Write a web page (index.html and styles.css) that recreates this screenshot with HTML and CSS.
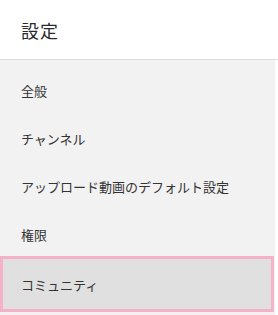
FILE: index.html
```html
<!DOCTYPE html>
<html lang="ja">
<head>
    <meta charset="UTF-8">
    <meta name="viewport" content="width=device-width, initial-scale=1.0">
    <title>設定</title>
    <link rel="stylesheet" href="styles.css">
</head>
<body>
    <div class="settings">
        <header class="settings-header">
            <h1 class="title">設定</h1>
        </header>
        <nav class="menu">
            <a class="menu-item" href="#">全般</a>
            <a class="menu-item" href="#">チャンネル</a>
            <a class="menu-item" href="#">アップロード動画のデフォルト設定</a>
            <a class="menu-item" href="#">権限</a>
            <a class="menu-item active" href="#">コミュニティ</a>
        </nav>
    </div>
</body>
</html>
```

FILE: styles.css
```css
:root {
    --panel-bg: #f2f2f2;
    --active-bg: #e0e0e0;
    --focus-pink: #f5b1c8;
    --text: #333333;
}

body {
    margin: 0;
    padding: 0;
    background: #ffffff;
    font-family: "Noto Sans CJK JP", "Noto Sans", sans-serif;
    color: var(--text);
}

.settings {
    width: 278px;
    height: 315px;
    display: flex;
    flex-direction: column;
}

.settings-header {
    height: 60px;
    border-bottom: 1px solid #dcdcdc;
    display: flex;
    align-items: center;
    padding-left: 21px;
    box-sizing: border-box;
}

.title {
    margin: 0;
    font-size: 18px;
    font-weight: 400;
    letter-spacing: 1px;
    color: #2b2b2b;
}

.menu {
    flex: 1;
    width: 275px;
    background: var(--panel-bg);
    padding-top: 6px;
    display: flex;
    flex-direction: column;
}

.menu-item {
    height: 48px;
    flex-shrink: 0;
    display: flex;
    align-items: center;
    padding-left: 21px;
    font-size: 13px;
    color: var(--text);
    text-decoration: none;
}

.menu-item.active {
    height: 56px;
    margin: -2px 1px 0 0;
    padding-left: 18px;
    box-sizing: border-box;
    border: 3px solid var(--focus-pink);
    background: var(--active-bg);
}
```
